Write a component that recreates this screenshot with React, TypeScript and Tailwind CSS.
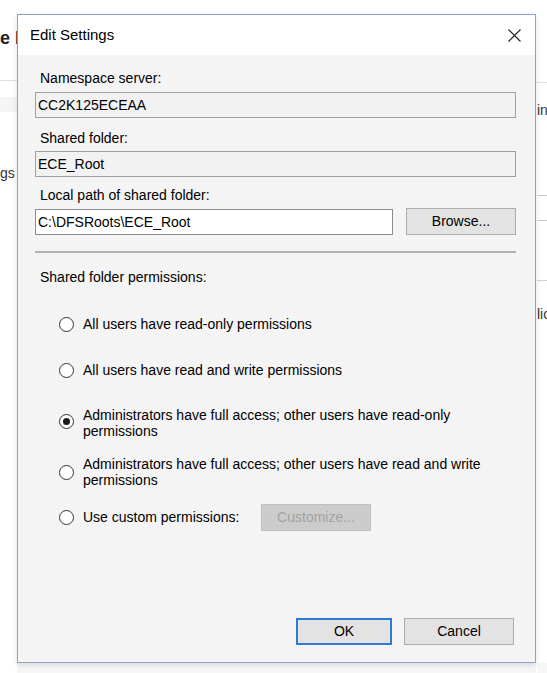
import React from 'react';

const Radio: React.FC<{ checked?: boolean; className?: string }> = ({ checked, className = '' }) => (
  <span
    className={`flex h-[15px] w-[15px] shrink-0 items-center justify-center rounded-full border border-[#333333] bg-white ${className}`}
  >
    {checked && <span className="h-[7px] w-[7px] rounded-full bg-[#1a1a1a]" />}
  </span>
);

const Label: React.FC<{ text: string; className?: string }> = ({ text, className = '' }) => (
  <div className={`h-[18px] pl-[5px] text-[14px] leading-[18px] text-black ${className}`}>{text}</div>
);

const App: React.FC = () => {
  return (
    <div className="relative h-[673px] w-[547px] overflow-hidden bg-white font-['Liberation_Sans',Arial,sans-serif]">
      {/* app behind the dialog */}
      <div className="flex h-full">
        <div className="flex w-[17px] shrink-0 flex-col">
          <div className="mt-[28px] h-[20px] whitespace-nowrap text-[18px] font-bold leading-[20px] text-[#222]">e N</div>
          <div className="mt-[32px] h-px bg-[#e3e3e3]" />
          <div className="mt-[16px] h-[15px] bg-[#f5f5f5]" />
          <div className="mt-[52px] h-[18px] whitespace-nowrap text-[14px] leading-[18px] text-[#333]">gs</div>
        </div>
        <div className="flex flex-1 flex-col">
          <div className="mt-auto h-[10px] bg-[#f6f6f6]" />
        </div>
        <div className="flex w-[11px] shrink-0 flex-col pl-px">
          <div className="mt-[82px] h-px bg-[#e3e3e3]" />
          <div className="mt-[18px] h-[18px] whitespace-nowrap text-[14px] leading-[18px] text-[#333]">in</div>
          <div className="mt-[76px] h-px bg-[#c8c8c8]" />
          <div className="mt-[24px] h-px bg-[#c8c8c8]" />
          <div className="mt-[59px] h-px bg-[#d2d2d2]" />
          <div className="mt-[24px] h-[18px] whitespace-nowrap text-[14px] leading-[18px] text-[#333]">lic</div>
          <div className="mt-auto h-[10px] bg-[#f6f6f6]" />
        </div>
      </div>

      {/* Edit Settings dialog */}
      <div className="absolute left-[17px] top-[14px] flex h-[649px] w-[519px] flex-col border border-[#8aa3c9] shadow-[0_2px_6px_rgba(0,0,0,0.12)]">
        <div className="flex h-[40px] shrink-0 items-center justify-between bg-white pl-[12px] pr-[14px]">
          <span className="text-[15px] text-black">Edit Settings</span>
          <svg width="13" height="13" viewBox="0 0 13 13" fill="none">
            <path d="M0.5 0.5L12.5 12.5M12.5 0.5L0.5 12.5" stroke="#222" strokeWidth="1.1" />
          </svg>
        </div>

        <div className="flex flex-1 flex-col bg-[#f4f4f4] pl-[17px] pr-[19px] text-[14px] text-black">
          <Label text="Namespace server:" className="mt-[14px]" />
          <div className="mt-[5px] flex h-[26px] items-center border border-[#a0a0a0] bg-[#f2f2f2] pl-[2px]">
            CC2K125ECEAA
          </div>

          <Label text="Shared folder:" className="mt-[11px]" />
          <div className="mt-[4px] flex h-[26px] items-center border border-[#a0a0a0] bg-[#f2f2f2] pl-[2px]">
            ECE_Root
          </div>

          <Label text="Local path of shared folder:" className="mt-[9px]" />
          <div className="mt-[4px] flex h-[27px] gap-[13px]">
            <div className="mt-px flex h-[26px] flex-1 items-center border border-[#8c8c8c] bg-white pl-[2px]">
              C:\DFSRoots\ECE_Root
            </div>
            <button className="flex h-[27px] w-[110px] items-center justify-center border border-[#adadad] bg-[#e3e3e3]">
              Browse...
            </button>
          </div>

          <div className="mt-[16px] h-[2px] bg-[#b2b2b2]" />

          <Label text="Shared folder permissions:" className="mt-[15px]" />

          <div className="flex flex-col pl-[24px]">
            <div className="mt-[26px] flex h-[24px] items-center gap-[9px]">
              <Radio />
              <span>All users have read-only permissions</span>
            </div>
            <div className="mt-[22px] flex h-[24px] items-center gap-[9px]">
              <Radio />
              <span>All users have read and write permissions</span>
            </div>
            <div className="mt-[25px] flex h-[32px] items-center gap-[9px]">
              <Radio checked className="mb-[4px]" />
              <span className="leading-[16px]">
                Administrators have full access; other users have read-only
                <br />
                permissions
              </span>
            </div>
            <div className="mt-[17px] flex h-[32px] items-center gap-[9px]">
              <Radio />
              <span className="leading-[16px]">
                Administrators have full access; other users have read and write
                <br />
                permissions
              </span>
            </div>
            <div className="mt-[16px] flex h-[27px] items-center gap-[9px]">
              <Radio />
              <span className="w-[178px] shrink-0">Use custom permissions:</span>
              <button
                disabled
                className="-ml-[9px] flex h-[27px] w-[110px] items-center justify-center border border-[#bfbfbf] bg-[#cccccc] text-[#a3a3a3]"
              >
                Customize...
              </button>
            </div>
          </div>

          <div className="mt-auto flex justify-end gap-[12px] pb-[17px] pr-[2px]">
            <button className="flex h-[27px] w-[96px] items-center justify-center border-2 border-[#2f7ad3] bg-[#e3e3e3]">
              OK
            </button>
            <button className="flex h-[27px] w-[110px] items-center justify-center border border-[#adadad] bg-[#e3e3e3]">
              Cancel
            </button>
          </div>
        </div>
      </div>
    </div>
  );
};

export default App;
